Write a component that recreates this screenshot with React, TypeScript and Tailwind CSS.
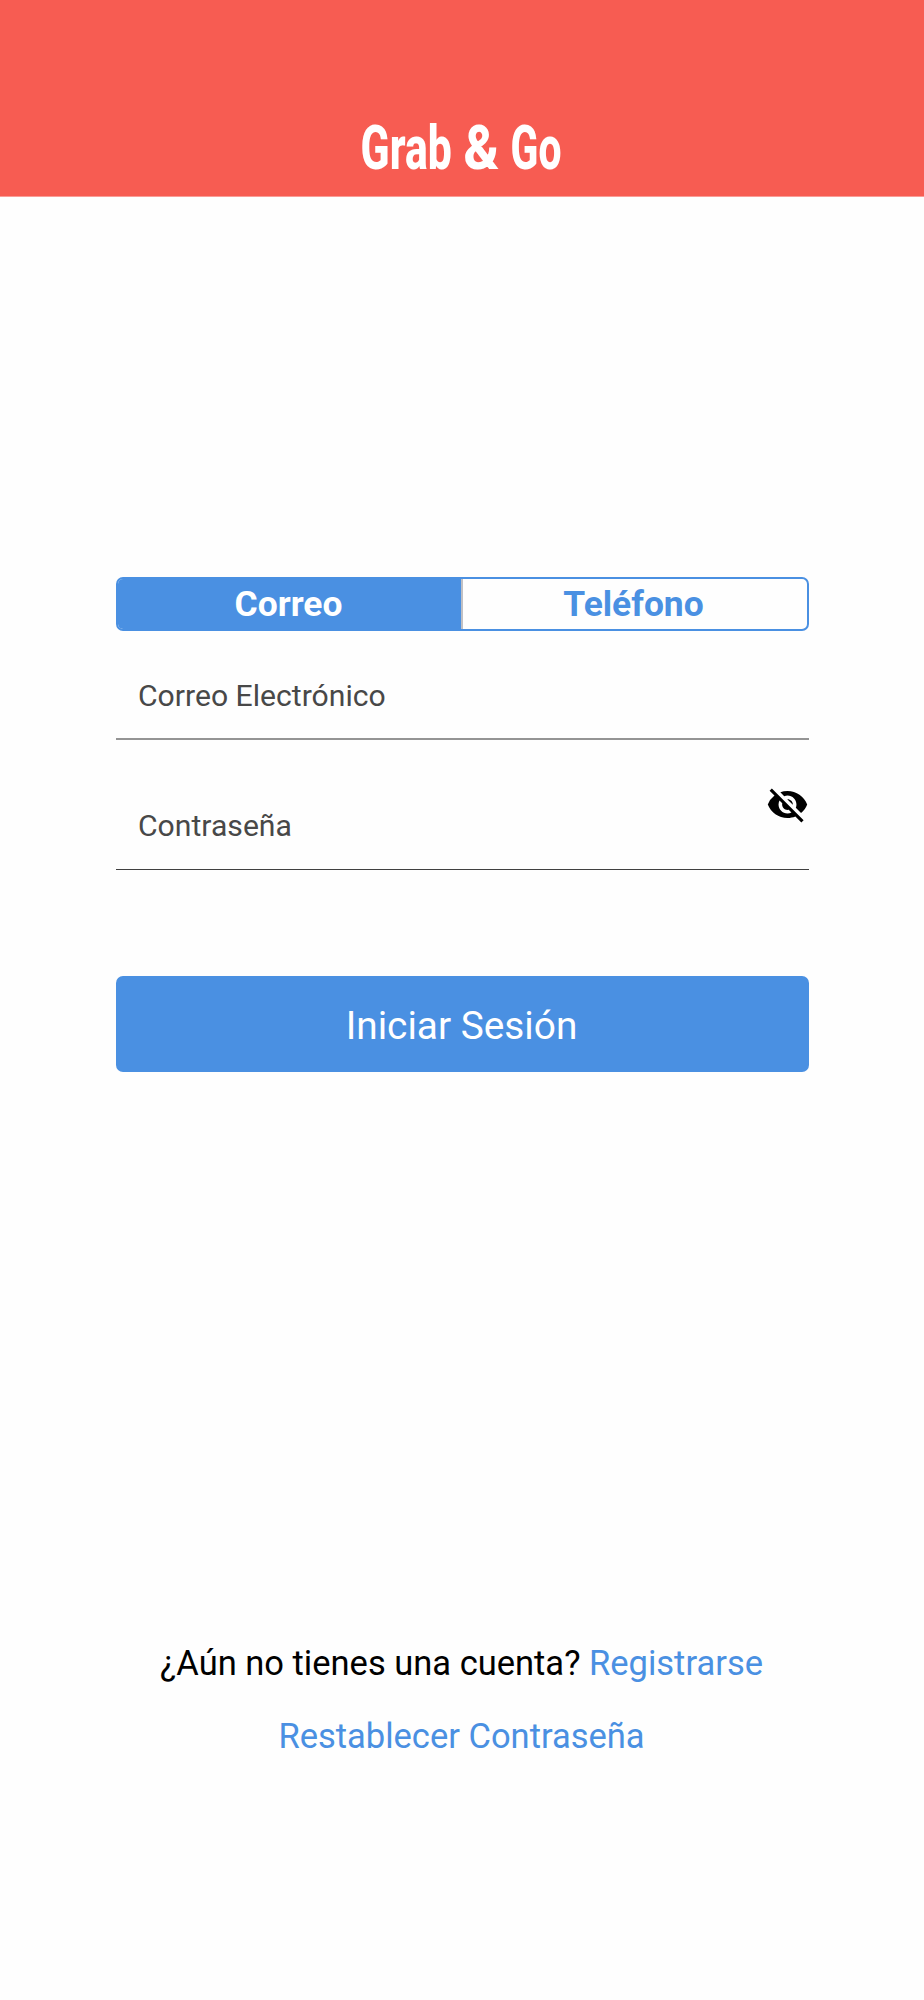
import React from "react";
import { MdVisibilityOff } from "react-icons/md";

export default function App() {
  return (
    <div className="flex h-[2000px] w-[924px] flex-col bg-[#fefefe] font-['Roboto',sans-serif]">
      <header className="flex h-[197px] items-end justify-center border-b border-[#fa9c96] bg-[#f75c52] pr-[2px] pb-[18px]">
        <h1 className="flex text-[61px] leading-[60px] font-extrabold whitespace-pre text-white">
          <span className="flex w-[89px] justify-center"><span className="scale-x-[0.7]">Grab</span></span>
          {" "}
          <span className="ml-[14px] flex w-[33px] justify-center"><span className="scale-x-[0.88]">&amp;</span></span>
          {" "}
          <span className="ml-[13px] flex w-[49px] justify-center"><span className="scale-x-[0.67]">Go</span></span>
        </h1>
      </header>
      <main className="flex flex-col pt-[380px] pr-[115px] pl-[116px]">
        <div className="flex h-[54px] overflow-hidden rounded-[7px] border-2 border-[#4a90e2] text-[35.4px] leading-[40px] font-bold">
          <button className="w-[343px] bg-[#4a90e2] pt-[3px] pr-[2px] pb-[3px] text-white">Correo</button>
          <button className="flex-1 border-l-2 border-[#c0c0c4] pt-[3px] pr-[3px] pb-[3px] text-[#4a90e2]">Teléfono</button>
        </div>
        <label className="flex h-[109px] items-center border-b-2 border-[#949494] px-[22px] pt-[22px] text-[30.15px] text-[#484848]">Correo Electrónico</label>
        <div className="flex h-[130px] justify-between border-b border-[#404040]">
          <label className="pt-[63px] pl-[22px] text-[30.15px] leading-[45px] text-[#484848]">Contraseña</label>
          <MdVisibilityOff className="mt-[43px] size-[43px] text-black" />
        </div>
        <button className="mt-[106px] h-[96px] rounded-[7px] bg-[#4a90e2] pt-[4px] pr-[2px] text-[38.8px] text-white">Iniciar Sesión</button>
      </main>
      <footer className="mt-[568px] flex flex-col items-center pr-px text-[34.5px] leading-[46px]">
        <p>¿Aún no tienes una cuenta? <a className="text-[#4a90e2]">Registrarse</a></p>
        <a className="mt-[27px] text-[#4a90e2]">Restablecer Contraseña</a>
      </footer>
    </div>
  );
}
